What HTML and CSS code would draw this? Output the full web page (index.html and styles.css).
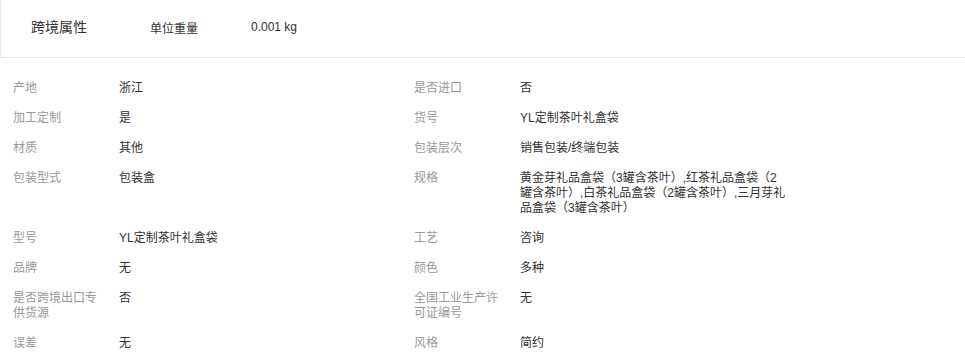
FILE: index.html
```html
<!DOCTYPE html>
<html lang="zh-CN">
<head>
    <meta charset="UTF-8">
    <meta name="viewport" content="width=device-width, initial-scale=1.0">
    <title>商品属性</title>
    <link rel="stylesheet" href="styles.css">
</head>
<body>

    <!-- Cross-border attributes -->
    <div class="cross-border">
        <span class="cb-title">跨境属性</span>
        <span class="cb-label">单位重量</span>
        <span class="cb-value">0.001 kg</span>
    </div>

    <!-- Product attributes -->
    <div class="attr-list">
        <div class="attr"><span class="attr-name">产地</span><span class="attr-value">浙江</span></div>
        <div class="attr"><span class="attr-name">是否进口</span><span class="attr-value">否</span></div>
        <div class="attr"><span class="attr-name">加工定制</span><span class="attr-value">是</span></div>
        <div class="attr"><span class="attr-name">货号</span><span class="attr-value">YL定制茶叶礼盒袋</span></div>
        <div class="attr"><span class="attr-name">材质</span><span class="attr-value">其他</span></div>
        <div class="attr"><span class="attr-name">包装层次</span><span class="attr-value">销售包装/终端包装</span></div>
        <div class="attr"><span class="attr-name">包装型式</span><span class="attr-value">包装盒</span></div>
        <div class="attr"><span class="attr-name">规格</span><span class="attr-value">黄金芽礼品盒袋（3罐含茶叶）,红茶礼品盒袋（2罐含茶叶）,白茶礼品盒袋（2罐含茶叶）,三月芽礼品盒袋（3罐含茶叶）</span></div>
        <div class="attr"><span class="attr-name">型号</span><span class="attr-value">YL定制茶叶礼盒袋</span></div>
        <div class="attr"><span class="attr-name">工艺</span><span class="attr-value">咨询</span></div>
        <div class="attr"><span class="attr-name">品牌</span><span class="attr-value">无</span></div>
        <div class="attr"><span class="attr-name">颜色</span><span class="attr-value">多种</span></div>
        <div class="attr"><span class="attr-name">是否跨境出口专供货源</span><span class="attr-value">否</span></div>
        <div class="attr"><span class="attr-name">全国工业生产许可证编号</span><span class="attr-value">无</span></div>
        <div class="attr"><span class="attr-name">误差</span><span class="attr-value">无</span></div>
        <div class="attr"><span class="attr-name">风格</span><span class="attr-value">简约</span></div>
    </div>

</body>
</html>
```

FILE: styles.css
```css
body {
    margin: 0;
    font-family: "Liberation Sans", "Noto Sans CJK SC", sans-serif;
    font-size: 12px;
    color: #333;
    background-color: #fff;
}

.cross-border {
    display: flex;
    align-items: center;
    height: 38px;
    padding: 8px 0 11px 30px;
    border-left: 1px solid #e6e6e6;
    border-bottom: 1px solid #e6e6e6;
}

.cb-title {
    width: 119px;
    font-size: 14px;
    line-height: 16px;
}

.cb-label {
    width: 101px;
}

.attr-list {
    display: grid;
    grid-template-columns: 374px 374px;
    column-gap: 27px;
    padding: 16px 0 0 13px;
}

.attr {
    display: flex;
    padding: 7px 0 8px;
    line-height: 15px;
}

.attr-name {
    flex: 0 0 92px;
    margin-right: 14px;
    color: #999;
}

.attr-value {
    flex: 0 0 268px;
    color: #333;
}
```
